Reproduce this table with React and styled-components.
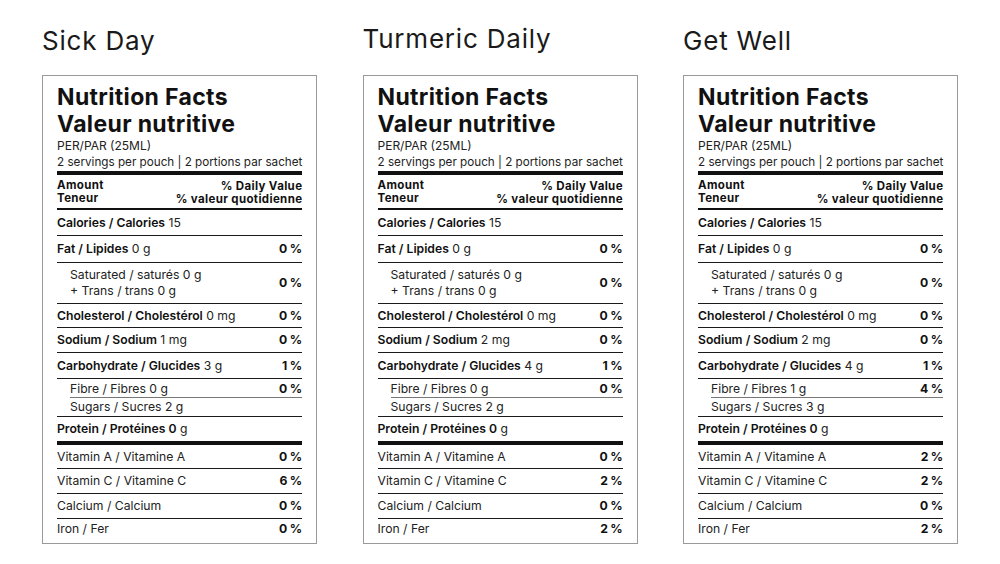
import React from 'react';
import styled, { createGlobalStyle } from 'styled-components';

const GlobalStyle = createGlobalStyle`
  html, body {
    margin: 0;
    padding: 0;
    background: #fff;
  }
  body {
    font-family: Inter, "Noto Sans", sans-serif;
    color: #111;
  }
`;

const products = [
  {
    name: 'Sick Day',
    lift: 0,
    sodium: '1 mg',
    carb: '3 g',
    carbDv: '1 %',
    fibre: '0 g',
    fibreDv: '0 %',
    sugars: '2 g',
    vitA: '0 %',
    vitC: '6 %',
    calcium: '0 %',
    iron: '0 %',
  },
  {
    name: 'Turmeric Daily',
    lift: 2.5,
    sodium: '2 mg',
    carb: '4 g',
    carbDv: '1 %',
    fibre: '0 g',
    fibreDv: '0 %',
    sugars: '2 g',
    vitA: '0 %',
    vitC: '2 %',
    calcium: '0 %',
    iron: '2 %',
  },
  {
    name: 'Get Well',
    lift: 0.5,
    sodium: '2 mg',
    carb: '4 g',
    carbDv: '1 %',
    fibre: '1 g',
    fibreDv: '4 %',
    sugars: '3 g',
    vitA: '2 %',
    vitC: '2 %',
    calcium: '0 %',
    iron: '2 %',
  },
];

const Page = styled.div`
  box-sizing: border-box;
  width: 1000px;
  height: 564px;
  padding: 23px 42px 0;
  display: grid;
  grid-template-columns: repeat(3, 275px);
  column-gap: 45.5px;
  align-items: start;
`;

const Column = styled.section`
  display: flex;
  flex-direction: column;
`;

const Heading = styled.h2`
  box-sizing: border-box;
  height: 52px;
  margin: 0;
  padding-top: ${p => 3 - p.$lift}px;
  font: 400 26px/30px Inter, sans-serif;
  letter-spacing: 0.8px;
  color: #1a1a1a;
`;

const Label = styled.div`
  border: 1px solid #9a9a9a;
  padding: 8px 14px 4px;
  font-size: 12px;
  line-height: 16px;
`;

const Title = styled.h3`
  margin: 0;
  font: 700 23px/27px Inter, sans-serif;
  letter-spacing: 0.35px;
  color: #111;
`;

const Serving = styled.div`
  font-size: 12px;
  line-height: 16px;
  color: #222;
  white-space: nowrap;
`;

const Servings = styled(Serving)`
  font-size: 11.7px;
  padding-bottom: 1px;
  border-bottom: 4px solid #111;
`;

const Header = styled.div`
  display: flex;
  justify-content: space-between;
  padding: 4px 0 3px;
  border-bottom: 2px solid #111;
  font-size: 11.5px;
  font-weight: 700;
  line-height: 12.5px;
  letter-spacing: 0.35px;
`;

const HeaderRight = styled.div`
  text-align: right;
  padding-top: 1px;
  margin-right: -0.35px;
`;

const Row = styled.div`
  display: flex;
  justify-content: space-between;
  align-items: ${p => p.$align || 'center'};
  height: ${p => p.$h || 24}px;
  margin-left: ${p => (p.$indent ? 13 : 0)}px;
  padding-left: ${p => (p.$pad ? 13 : 0)}px;
  border-bottom: ${p => p.$rule || '1px solid #1a1a1a'};
  font-size: 12.2px;
  line-height: 16px;
`;

const Name = styled.div`
  color: #222;
  white-space: nowrap;
`;

const B = styled.b`
  font-weight: 600;
  color: #111;
`;

const Percent = styled.div`
  font-weight: 700;
  color: #111;
  letter-spacing: -0.2px;
`;

function Facts({ p }) {
  return (
    <Label>
      <Title>Nutrition Facts</Title>
      <Title>Valeur nutritive</Title>
      <Serving>PER/PAR (25ML)</Serving>
      <Servings>2 servings per pouch | 2 portions par sachet</Servings>
      <Header>
        <div>
          Amount
          <br />
          Teneur
        </div>
        <HeaderRight>
          % Daily Value
          <br />
          % valeur quotidienne
        </HeaderRight>
      </Header>
      <Row $h={25}>
        <Name>
          <B>Calories / Calories</B> 15
        </Name>
      </Row>
      <Row $h={26}>
        <Name>
          <B>Fat / Lipides</B> 0 g
        </Name>
        <Percent>0 %</Percent>
      </Row>
      <Row $h={40} $pad>
        <Name>
          Saturated / saturés 0 g
          <br />+ Trans / trans 0 g
        </Name>
        <Percent>0 %</Percent>
      </Row>
      <Row $h={23}>
        <Name>
          <B>Cholesterol / Cholestérol</B> 0 mg
        </Name>
        <Percent>0 %</Percent>
      </Row>
      <Row>
        <Name>
          <B>Sodium / Sodium</B> {p.sodium}
        </Name>
        <Percent>0 %</Percent>
      </Row>
      <Row $h={25}>
        <Name>
          <B>Carbohydrate / Glucides</B> {p.carb}
        </Name>
        <Percent>{p.carbDv}</Percent>
      </Row>
      <Row $h={18} $indent $align="flex-end" $rule="1px solid #777">
        <Name>Fibre / Fibres {p.fibre}</Name>
        <Percent>{p.fibreDv}</Percent>
      </Row>
      <Row $h={18} $pad>
        <Name>Sugars / Sucres {p.sugars}</Name>
      </Row>
      <Row $rule="4px solid #111">
        <Name>
          <B>Protein / Protéines 0</B> g
        </Name>
      </Row>
      <Row $h={23}>
        <Name>Vitamin A / Vitamine A</Name>
        <Percent>{p.vitA}</Percent>
      </Row>
      <Row>
        <Name>Vitamin C / Vitamine C</Name>
        <Percent>{p.vitC}</Percent>
      </Row>
      <Row>
        <Name>Calcium / Calcium</Name>
        <Percent>{p.calcium}</Percent>
      </Row>
      <Row $h={20} $rule="none">
        <Name>Iron / Fer</Name>
        <Percent>{p.iron}</Percent>
      </Row>
    </Label>
  );
}

export default function App() {
  return (
    <>
      <GlobalStyle />
      <Page>
        {products.map(p => (
          <Column key={p.name}>
            <Heading $lift={p.lift}>{p.name}</Heading>
            <Facts p={p} />
          </Column>
        ))}
      </Page>
    </>
  );
}
